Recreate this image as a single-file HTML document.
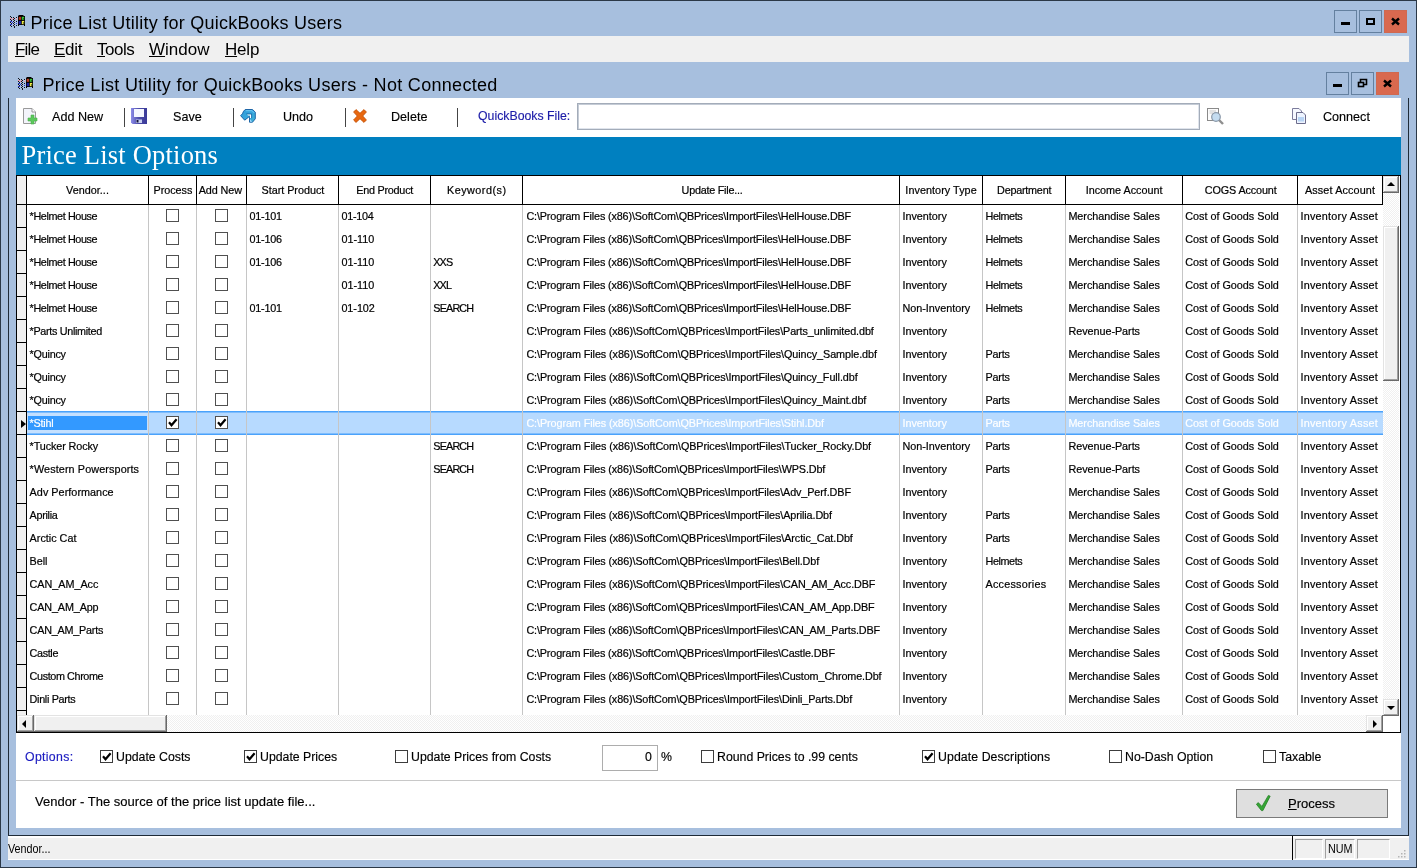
<!DOCTYPE html>
<html lang="en"><head><meta charset="utf-8"><title>Price List Utility for QuickBooks Users</title>
<style>
html,body{margin:0;padding:0;width:1417px;height:868px;overflow:hidden}
body{width:1417px;height:868px;overflow:hidden;position:relative;background:#a7bfde;font-family:"Liberation Sans",sans-serif;color:#000}
div,span,i,u,b{box-sizing:border-box}
.abs{position:absolute}
#frame{position:absolute;left:0;top:0;width:1417px;height:868px;border:1px solid #2b3847}
#t1{position:absolute;left:30.4px;top:11px;font-size:18px;line-height:24px;white-space:nowrap;letter-spacing:0.25px}
#menubar{position:absolute;left:8px;top:36px;width:1401px;height:26px;background:#f0f0f0}
#menubar span{position:absolute;top:1px;font-size:17px;line-height:25px;white-space:nowrap}
#menubar span u{text-decoration:underline;text-underline-offset:1px;text-decoration-thickness:1px}
#t2{position:absolute;left:42.5px;top:73px;font-size:18px;line-height:24px;white-space:nowrap;letter-spacing:0.31px}
.wb{position:absolute;width:23px;height:23px;border:1px solid #64809f;background:#a7bfde}
.wb.cl{background:#d9694f;border-color:#cf6950}
.wb svg{position:absolute;left:0;top:0}
#child{position:absolute;left:8px;top:98px;width:1401px;height:738px;border:1px solid #1f2b38;border-top:0}
#content{position:absolute;left:16px;top:98px;width:1385px;height:730px;background:#fff}
#banner{position:absolute;left:16px;top:137px;width:1385px;height:38px;background:#0080c0;color:#fff;font-family:"Liberation Serif",serif;font-size:26.5px;line-height:36px;padding-left:5.6px;letter-spacing:0.2px;white-space:nowrap}
.tb{position:absolute;top:109px;font-size:12.6px;line-height:16px;white-space:nowrap}
.sep{position:absolute;top:108px;width:1px;height:19px;background:#444}
.ico{position:absolute}
#qbf{position:absolute;left:577px;top:103px;width:623px;height:27px;border:1px solid #a3acb9;box-shadow:inset 1px 1px 0 #c5ccd6, inset -1px -1px 0 #dfe4ec;background:#fff}
#gridbox{position:absolute;left:16px;top:175px;width:1385px;height:558px;border:1px solid #000;background:#fff}
#grid{position:absolute;left:0;top:0;width:0;height:0;font-size:10.8px}
.hsel{position:absolute;left:17px;top:176px;width:10px;height:29px;background:#f0f0f0;border-right:1px solid #000;border-bottom:1px solid #000}
.hc{position:absolute;top:176px;height:28px;border-right:1px solid #000;border-bottom:1px solid #000;box-sizing:content-box;text-align:center;line-height:28px;white-space:nowrap;background:#fff;overflow:hidden}
.vl{position:absolute;top:205px;width:1px;height:510px;background:#c6c6c6}
.row{position:absolute;left:0;width:1383px;height:23px;line-height:22px;white-space:nowrap}
.rs{position:absolute;left:17px;top:0;width:10px;height:23px;background:#f0f0f0;border-right:1px solid #000;border-bottom:1px solid #000}
.c{position:absolute;top:0;height:22px;padding-left:3px;overflow:hidden}
.cb{position:absolute;top:4px;width:13px;height:13px;border:1px solid #505050;background:#fff;text-decoration:none}
.cb svg{position:absolute;left:-1px;top:-1px}
.row.sel{}
.row.sel .c{color:#fff}
.tri{position:absolute;left:4px;top:8px;width:0;height:0;border-left:5px solid #000;border-top:4.5px solid transparent;border-bottom:4.5px solid transparent}
#selbg{position:absolute;left:27px;top:411px;width:1356px;height:24px;background:#b7daff;border-top:1px solid #4aa2fb;border-bottom:1px solid #4aa2fb;box-shadow:inset 0 1px 0 #7fbdfd, inset 0 -1px 0 #7fbdfd}
#focus{position:absolute;left:27px;top:413px;width:121px;height:20px;background:#3399ff;border:3px solid #c4e0ff;border-left-width:1px;border-right-width:1px}
.opt{position:absolute;font-size:12.3px;line-height:16px;white-space:nowrap;top:749px}
.ocb{position:absolute;top:750px;width:13px;height:13px;border:1px solid #3c3c3c;background:#fff}
.ocb svg{position:absolute;left:-1px;top:-1px}
#status{position:absolute;left:8px;top:836px;width:1401px;height:24px;background:#f0f0f0;border-top:2px solid #fff;border-bottom:1px solid #fff;font-size:12px}
.sp{position:absolute;top:839px;height:20px;border:1px solid #a0a0a0;border-right-color:#fff;border-bottom-color:#fff}
.trk{position:absolute;background:repeating-conic-gradient(#ffffff 0% 25%, #f0f0f0 0% 50%) 0 0/2px 2px}
.b3{position:absolute;background:#f0f0f0;box-shadow:inset -1px -1px 0 #696969, inset 1px 1px 0 #e3e3e3, inset -2px -2px 0 #a0a0a0, inset 2px 2px 0 #fff}
.ar{position:absolute;width:0;height:0}
#app{position:absolute;left:0;top:0;width:1417px;height:868px;will-change:transform}
#grid{-webkit-text-stroke:0.2px currentColor}
.opt,.tb,#desc,#proc{-webkit-text-stroke:0.15px currentColor}

</style></head>
<body>
<div id="app">
<div id="frame"></div>
<svg class="ico" style="left:9px;top:15px" width="17" height="13" viewBox="0 0 17 13"><rect x="1" y="1" width="1" height="1" fill="#101018"/><rect x="2" y="2" width="1" height="1" fill="#101018"/><rect x="1" y="4" width="1" height="1" fill="#101018"/><rect x="2" y="5" width="1" height="1" fill="#101018"/><rect x="1" y="7" width="1" height="1" fill="#101018"/><rect x="2" y="8" width="1" height="1" fill="#101018"/><rect x="1" y="10" width="1" height="1" fill="#101018"/><rect x="2" y="11" width="1" height="1" fill="#101018"/><rect x="1" y="3" width="1" height="1" fill="#e890a0"/><rect x="2" y="3" width="1" height="1" fill="#e890a0"/><rect x="1" y="6" width="1" height="1" fill="#2838c8"/><rect x="2" y="6" width="1" height="1" fill="#2838c8"/><rect x="1" y="9" width="1" height="1" fill="#2838c8"/><rect x="2" y="9" width="1" height="1" fill="#2838c8"/><rect x="4" y="2" width="1" height="1" fill="#101018"/><rect x="5" y="3" width="1" height="1" fill="#101018"/><rect x="4" y="4" width="1" height="1" fill="#101018"/><rect x="5" y="5" width="1" height="1" fill="#101018"/><rect x="4" y="6" width="1" height="1" fill="#101018"/><rect x="5" y="7" width="1" height="1" fill="#101018"/><rect x="4" y="8" width="1" height="1" fill="#101018"/><rect x="5" y="9" width="1" height="1" fill="#101018"/><rect x="4" y="10" width="1" height="1" fill="#101018"/><rect x="5" y="11" width="1" height="1" fill="#101018"/><rect x="5" y="12" width="1" height="1" fill="#101018"/><rect x="3" y="4" width="1" height="1" fill="#e890a0"/><rect x="4" y="3" width="1" height="1" fill="#e890a0"/><rect x="3" y="7" width="1" height="1" fill="#2838c8"/><rect x="3" y="8" width="1" height="1" fill="#a8b8f0"/><rect x="3" y="6" width="1" height="1" fill="#a8b8f0"/><rect x="7" y="2" width="1" height="1" fill="#101018"/><rect x="7" y="4" width="1" height="1" fill="#e890a0"/><rect x="7" y="6" width="1" height="1" fill="#101018"/><rect x="7" y="8" width="1" height="1" fill="#2838c8"/><rect x="7" y="10" width="1" height="1" fill="#101018"/><rect x="7" y="3" width="1" height="1" fill="#d8c8d8"/><rect x="7" y="7" width="1" height="1" fill="#a8b8f0"/><rect x="7" y="9" width="1" height="1" fill="#a8b8f0"/><path d="M9 1 L10 0 H14 L15 1 H16 V11 H15 V10 H10 V11 H9Z" fill="#000"/><rect x="9.7" y="1.8" width="2.4" height="3" fill="#b83820"/><rect x="12.8" y="1.8" width="2.4" height="3" fill="#38c838"/><rect x="9.7" y="5.9" width="2.4" height="3.3" fill="#2020a0"/><rect x="12.8" y="5.9" width="2.4" height="3.3" fill="#f0f048"/><path d="M13.6 3.4 L15.2 3.4 L15.2 4.8Z M13.6 7.6 L15.2 7.6 L15.2 9.2Z" fill="#000"/></svg>
<div id="t1">Price List Utility for QuickBooks Users</div>
<div class="wb" style="left:1334px;top:10px"><svg width="21" height="21" viewBox="0 0 21 21"><rect x="6" y="11" width="9" height="3" fill="#000"/></svg></div>
<div class="wb" style="left:1359px;top:10px"><svg width="21" height="21" viewBox="0 0 21 21"><rect x="7" y="8" width="7" height="5" fill="none" stroke="#000" stroke-width="2"/></svg></div>
<div class="wb cl" style="left:1384px;top:10px"><svg width="21" height="21" viewBox="0 0 21 21"><path d="M7 7.5 L14 13.5 M14 7.5 L7 13.5" stroke="#000" stroke-width="2.4"/></svg></div>
<div id="menubar"><span style="left:7px;letter-spacing:-0.8px"><u>F</u>ile</span><span style="left:46px;letter-spacing:-0.3px"><u>E</u>dit</span><span style="left:89px;letter-spacing:-0.5px"><u>T</u>ools</span><span style="left:141px"><u>W</u>indow</span><span style="left:217px;letter-spacing:-0.2px"><u>H</u>elp</span></div>
<svg class="ico" style="left:17px;top:77px" width="17" height="13" viewBox="0 0 17 13"><rect x="1" y="1" width="1" height="1" fill="#101018"/><rect x="2" y="2" width="1" height="1" fill="#101018"/><rect x="1" y="4" width="1" height="1" fill="#101018"/><rect x="2" y="5" width="1" height="1" fill="#101018"/><rect x="1" y="7" width="1" height="1" fill="#101018"/><rect x="2" y="8" width="1" height="1" fill="#101018"/><rect x="1" y="10" width="1" height="1" fill="#101018"/><rect x="2" y="11" width="1" height="1" fill="#101018"/><rect x="1" y="3" width="1" height="1" fill="#e890a0"/><rect x="2" y="3" width="1" height="1" fill="#e890a0"/><rect x="1" y="6" width="1" height="1" fill="#2838c8"/><rect x="2" y="6" width="1" height="1" fill="#2838c8"/><rect x="1" y="9" width="1" height="1" fill="#2838c8"/><rect x="2" y="9" width="1" height="1" fill="#2838c8"/><rect x="4" y="2" width="1" height="1" fill="#101018"/><rect x="5" y="3" width="1" height="1" fill="#101018"/><rect x="4" y="4" width="1" height="1" fill="#101018"/><rect x="5" y="5" width="1" height="1" fill="#101018"/><rect x="4" y="6" width="1" height="1" fill="#101018"/><rect x="5" y="7" width="1" height="1" fill="#101018"/><rect x="4" y="8" width="1" height="1" fill="#101018"/><rect x="5" y="9" width="1" height="1" fill="#101018"/><rect x="4" y="10" width="1" height="1" fill="#101018"/><rect x="5" y="11" width="1" height="1" fill="#101018"/><rect x="5" y="12" width="1" height="1" fill="#101018"/><rect x="3" y="4" width="1" height="1" fill="#e890a0"/><rect x="4" y="3" width="1" height="1" fill="#e890a0"/><rect x="3" y="7" width="1" height="1" fill="#2838c8"/><rect x="3" y="8" width="1" height="1" fill="#a8b8f0"/><rect x="3" y="6" width="1" height="1" fill="#a8b8f0"/><rect x="7" y="2" width="1" height="1" fill="#101018"/><rect x="7" y="4" width="1" height="1" fill="#e890a0"/><rect x="7" y="6" width="1" height="1" fill="#101018"/><rect x="7" y="8" width="1" height="1" fill="#2838c8"/><rect x="7" y="10" width="1" height="1" fill="#101018"/><rect x="7" y="3" width="1" height="1" fill="#d8c8d8"/><rect x="7" y="7" width="1" height="1" fill="#a8b8f0"/><rect x="7" y="9" width="1" height="1" fill="#a8b8f0"/><path d="M9 1 L10 0 H14 L15 1 H16 V11 H15 V10 H10 V11 H9Z" fill="#000"/><rect x="9.7" y="1.8" width="2.4" height="3" fill="#b83820"/><rect x="12.8" y="1.8" width="2.4" height="3" fill="#38c838"/><rect x="9.7" y="5.9" width="2.4" height="3.3" fill="#2020a0"/><rect x="12.8" y="5.9" width="2.4" height="3.3" fill="#f0f048"/><path d="M13.6 3.4 L15.2 3.4 L15.2 4.8Z M13.6 7.6 L15.2 7.6 L15.2 9.2Z" fill="#000"/></svg>
<div id="t2">Price List Utility for QuickBooks Users - Not Connected</div>
<div class="wb" style="left:1326px;top:72px"><svg width="21" height="21" viewBox="0 0 21 21"><rect x="6" y="11" width="9" height="3" fill="#000"/></svg></div>
<div class="wb" style="left:1351px;top:72px"><svg width="21" height="21" viewBox="0 0 21 21"><path d="M8.5 9 V6.5 H14.5 V11.5 H12" fill="none" stroke="#000" stroke-width="1.6"/><rect x="6.5" y="9.5" width="5" height="4" fill="none" stroke="#000" stroke-width="1.6"/></svg></div>
<div class="wb cl" style="left:1376px;top:72px"><svg width="21" height="21" viewBox="0 0 21 21"><path d="M7 7.5 L14 13.5 M14 7.5 L7 13.5" stroke="#000" stroke-width="2.4"/></svg></div>
<div id="child"></div>
<div id="content"></div>
<!-- toolbar -->
<svg class="ico" style="left:23px;top:108px" width="16" height="17" viewBox="0 0 16 17"><path d="M0.5 0.5 H9 L12.5 4 V15.5 H0.5Z" fill="#f3f4fb" stroke="#9a9a9a"/><path d="M9 0.5 V4 H12.5" fill="#fff" stroke="#9a9a9a"/><path d="M8 7 H11 V10 H14 V13 H11 V16 H8 V13 H5 V10 H8Z" fill="#5cc85c" stroke="#49b049" stroke-width="0.6"/></svg>
<div class="tb" style="left:52px">Add New</div>
<div class="sep" style="left:124px"></div>
<svg class="ico" style="left:131px;top:108px" width="16" height="16" viewBox="0 0 16 16"><defs><linearGradient id="sg" x1="0" y1="0" x2="1" y2="0"><stop offset="0" stop-color="#8c8ce8"/><stop offset="0.5" stop-color="#4a4aa8"/><stop offset="1" stop-color="#3a3a98"/></linearGradient></defs><path d="M0 0 H16 V16 H1.5 L0 14.5Z" fill="url(#sg)"/><rect x="3" y="1" width="10" height="8" fill="#f4f6ff"/><rect x="5" y="11.5" width="6" height="3.5" fill="#c8d0f0"/><rect x="5.5" y="12" width="2" height="2.5" fill="#10103a"/></svg>
<div class="tb" style="left:173px">Save</div>
<div class="sep" style="left:233px"></div>
<svg class="ico" style="left:240px;top:108px" width="16" height="16" viewBox="0 0 16 16"><defs><linearGradient id="ug" x1="0" y1="0" x2="1" y2="1"><stop offset="0" stop-color="#2f9ad8"/><stop offset="0.5" stop-color="#37a6dc"/><stop offset="1" stop-color="#3fb4d4"/></linearGradient></defs><path d="M5.2 1.5 H12.5 L15.3 4.2 V10.8 L12.5 14.2 H9.5 V8.4 L4.7 12.2 L0.6 7.7 L2.4 5.8 L3.6 3.2Z" fill="url(#ug)" stroke="#11599f" stroke-width="0.9" stroke-linejoin="round"/><path d="M7 6.2 H11.2 V10 H9.9 V7.4 H8Z" fill="#fff"/><path d="M6.3 5.9 H11.6 V10.2" fill="none" stroke="#11599f" stroke-width="0.7"/><path d="M10 11.2 L12.3 13.7 H10Z" fill="#a6d8ff"/><path d="M5.8 2.7 H12 L14.2 4.9" fill="none" stroke="#78cdf6" stroke-width="0.9"/></svg>
<div class="tb" style="left:283px">Undo</div>
<div class="sep" style="left:345px"></div>
<svg class="ico" style="left:353px;top:109px" width="14" height="14" viewBox="0 0 14 14"><path d="M3 0.6 L7 4.3 L11 0.6 L13.4 3 L9.7 7 L13.4 11 L11 13.4 L7 9.7 L3 13.4 L0.6 11 L4.3 7 L0.6 3Z" fill="#e8670f" stroke="#c45208" stroke-width="0.9" stroke-linejoin="round"/></svg>
<div class="tb" style="left:391px">Delete</div>
<div class="sep" style="left:457px"></div>
<div class="tb" style="left:478px;color:#1c1ca8;font-size:12.3px;top:108px">QuickBooks File:</div>
<div id="qbf"></div>
<svg class="ico" style="left:1207px;top:108px" width="18" height="17" viewBox="0 0 18 17"><rect x="0.5" y="0.5" width="11" height="12" fill="#fcfcfc" stroke="#8a8a8a"/><path d="M2.5 3 H9 M2.5 5 H6" stroke="#c8c8c8"/><path d="M12 12 L16 16" stroke="#8f8f8f" stroke-width="2.4"/><circle cx="9" cy="9" r="4.3" fill="#c4dcf0" stroke="#8a98a8" stroke-width="1.2"/></svg>
<svg class="ico" style="left:1292px;top:108px" width="15" height="17" viewBox="0 0 15 17"><path d="M0.5 0.5 H7 L9.5 3 V11.5 H0.5Z" fill="#f6f8ff" stroke="#7c7c9c"/><path d="M4.5 4.5 H11 L13.5 7 V15.5 H4.5Z" fill="#eef4ff" stroke="#6c6c8c"/><rect x="6" y="9" width="6" height="4.5" fill="#b8d4f4"/></svg>
<div class="tb" style="left:1323px">Connect</div>
<div id="banner">Price List Options</div>
<div id="gridbox"></div>
<div id="grid">
<div id="selbg"></div>
<div id="focus"></div>
<div class="hsel"></div>
<div class="hc" style="left:27px;width:121px"><span style="position:relative;left:0.00px;letter-spacing:0.025px">Vendor...</span></div>
<div class="hc" style="left:149px;width:47px"><span style="position:relative;left:0.45px;letter-spacing:-0.017px">Process</span></div>
<div class="hc" style="left:197px;width:49px"><span style="position:relative;left:-1.25px;letter-spacing:-0.083px">Add New</span></div>
<div class="hc" style="left:247px;width:91px"><span style="position:relative;left:0.40px;letter-spacing:-0.017px">Start Product</span></div>
<div class="hc" style="left:339px;width:91px"><span style="position:relative;left:0.15px;letter-spacing:-0.230px">End Product</span></div>
<div class="hc" style="left:431px;width:91px"><span style="position:relative;left:0.25px;letter-spacing:0.500px">Keyword(s)</span></div>
<div class="hc" style="left:523px;width:376px"><span style="position:relative;left:1.05px;letter-spacing:-0.238px">Update File...</span></div>
<div class="hc" style="left:900px;width:82px"><span style="position:relative;left:0.05px;letter-spacing:0.054px">Inventory Type</span></div>
<div class="hc" style="left:983px;width:82px"><span style="position:relative;left:0.15px;letter-spacing:-0.233px">Department</span></div>
<div class="hc" style="left:1066px;width:116px"><span style="position:relative;left:0.10px;letter-spacing:0.000px">Income Account</span></div>
<div class="hc" style="left:1183px;width:114px"><span style="position:relative;left:0.70px;letter-spacing:-0.127px">COGS Account</span></div>
<div class="hc" style="left:1298px;width:84px"><span style="position:relative;left:0.00px;letter-spacing:0.133px">Asset Account</span></div>
<div class="vl" style="left:148px"></div>
<div class="vl" style="left:196px"></div>
<div class="vl" style="left:246px"></div>
<div class="vl" style="left:338px"></div>
<div class="vl" style="left:430px"></div>
<div class="vl" style="left:522px"></div>
<div class="vl" style="left:899px"></div>
<div class="vl" style="left:982px"></div>
<div class="vl" style="left:1065px"></div>
<div class="vl" style="left:1182px"></div>
<div class="vl" style="left:1297px"></div>
<div class="row" id="r0" style="top:205px"><i class="rs"></i><span class="c v" style="left:27px;width:121px;padding-left:2.60px;letter-spacing:-0.384px">*Helmet House</span><u class="cb" style="left:166px"></u><u class="cb" style="left:215px"></u><span class="c" style="left:247px;width:91px;padding-left:2.50px;letter-spacing:-0.240px">01-101</span><span class="c" style="left:339px;width:91px;padding-left:2.40px;letter-spacing:-0.240px">01-104</span><span class="c" style="left:523px;width:376px;padding-left:3.40px;letter-spacing:-0.139px">C:\Program Files (x86)\SoftCom\QBPrices\ImportFiles\HelHouse.DBF</span><span class="c" style="left:900px;width:82px;padding-left:2.40px">Inventory</span><span class="c" style="left:983px;width:82px;padding-left:2.50px;letter-spacing:-0.400px">Helmets</span><span class="c" style="left:1066px;width:116px;padding-left:2.40px;letter-spacing:-0.025px">Merchandise Sales</span><span class="c" style="left:1183px;width:114px;padding-left:2.20px;letter-spacing:0.003px">Cost of Goods Sold</span><span class="c" style="left:1298px;width:84px;padding-left:2.40px;letter-spacing:0.257px">Inventory Asset</span></div>
<div class="row" id="r1" style="top:228px"><i class="rs"></i><span class="c v" style="left:27px;width:121px;padding-left:2.60px;letter-spacing:-0.384px">*Helmet House</span><u class="cb" style="left:166px"></u><u class="cb" style="left:215px"></u><span class="c" style="left:247px;width:91px;padding-left:2.50px;letter-spacing:-0.240px">01-106</span><span class="c" style="left:339px;width:91px;padding-left:2.40px">01-110</span><span class="c" style="left:523px;width:376px;padding-left:3.40px;letter-spacing:-0.139px">C:\Program Files (x86)\SoftCom\QBPrices\ImportFiles\HelHouse.DBF</span><span class="c" style="left:900px;width:82px;padding-left:2.40px">Inventory</span><span class="c" style="left:983px;width:82px;padding-left:2.50px;letter-spacing:-0.400px">Helmets</span><span class="c" style="left:1066px;width:116px;padding-left:2.40px;letter-spacing:-0.025px">Merchandise Sales</span><span class="c" style="left:1183px;width:114px;padding-left:2.20px;letter-spacing:0.003px">Cost of Goods Sold</span><span class="c" style="left:1298px;width:84px;padding-left:2.40px;letter-spacing:0.257px">Inventory Asset</span></div>
<div class="row" id="r2" style="top:251px"><i class="rs"></i><span class="c v" style="left:27px;width:121px;padding-left:2.60px;letter-spacing:-0.384px">*Helmet House</span><u class="cb" style="left:166px"></u><u class="cb" style="left:215px"></u><span class="c" style="left:247px;width:91px;padding-left:2.50px;letter-spacing:-0.240px">01-106</span><span class="c" style="left:339px;width:91px;padding-left:2.40px">01-110</span><span class="c" style="left:431px;width:91px;padding-left:2.30px;letter-spacing:-0.900px">XXS</span><span class="c" style="left:523px;width:376px;padding-left:3.40px;letter-spacing:-0.139px">C:\Program Files (x86)\SoftCom\QBPrices\ImportFiles\HelHouse.DBF</span><span class="c" style="left:900px;width:82px;padding-left:2.40px">Inventory</span><span class="c" style="left:983px;width:82px;padding-left:2.50px;letter-spacing:-0.400px">Helmets</span><span class="c" style="left:1066px;width:116px;padding-left:2.40px;letter-spacing:-0.025px">Merchandise Sales</span><span class="c" style="left:1183px;width:114px;padding-left:2.20px;letter-spacing:0.003px">Cost of Goods Sold</span><span class="c" style="left:1298px;width:84px;padding-left:2.40px;letter-spacing:0.257px">Inventory Asset</span></div>
<div class="row" id="r3" style="top:274px"><i class="rs"></i><span class="c v" style="left:27px;width:121px;padding-left:2.60px;letter-spacing:-0.384px">*Helmet House</span><u class="cb" style="left:166px"></u><u class="cb" style="left:215px"></u><span class="c" style="left:339px;width:91px;padding-left:2.40px">01-110</span><span class="c" style="left:431px;width:91px;padding-left:2.30px;letter-spacing:-0.900px">XXL</span><span class="c" style="left:523px;width:376px;padding-left:3.40px;letter-spacing:-0.139px">C:\Program Files (x86)\SoftCom\QBPrices\ImportFiles\HelHouse.DBF</span><span class="c" style="left:900px;width:82px;padding-left:2.40px">Inventory</span><span class="c" style="left:983px;width:82px;padding-left:2.50px;letter-spacing:-0.400px">Helmets</span><span class="c" style="left:1066px;width:116px;padding-left:2.40px;letter-spacing:-0.025px">Merchandise Sales</span><span class="c" style="left:1183px;width:114px;padding-left:2.20px;letter-spacing:0.003px">Cost of Goods Sold</span><span class="c" style="left:1298px;width:84px;padding-left:2.40px;letter-spacing:0.257px">Inventory Asset</span></div>
<div class="row" id="r4" style="top:297px"><i class="rs"></i><span class="c v" style="left:27px;width:121px;padding-left:2.60px;letter-spacing:-0.384px">*Helmet House</span><u class="cb" style="left:166px"></u><u class="cb" style="left:215px"></u><span class="c" style="left:247px;width:91px;padding-left:2.50px;letter-spacing:-0.240px">01-101</span><span class="c" style="left:339px;width:91px;padding-left:2.40px;letter-spacing:-0.040px">01-102</span><span class="c" style="left:431px;width:91px;padding-left:2.30px;letter-spacing:-0.840px">SEARCH</span><span class="c" style="left:523px;width:376px;padding-left:3.40px;letter-spacing:-0.139px">C:\Program Files (x86)\SoftCom\QBPrices\ImportFiles\HelHouse.DBF</span><span class="c" style="left:900px;width:82px;padding-left:2.40px;letter-spacing:-0.003px">Non-Inventory</span><span class="c" style="left:983px;width:82px;padding-left:2.50px;letter-spacing:-0.400px">Helmets</span><span class="c" style="left:1066px;width:116px;padding-left:2.40px;letter-spacing:-0.025px">Merchandise Sales</span><span class="c" style="left:1183px;width:114px;padding-left:2.20px;letter-spacing:0.003px">Cost of Goods Sold</span><span class="c" style="left:1298px;width:84px;padding-left:2.40px;letter-spacing:0.257px">Inventory Asset</span></div>
<div class="row" id="r5" style="top:320px"><i class="rs"></i><span class="c v" style="left:27px;width:121px;padding-left:2.60px;letter-spacing:-0.320px">*Parts Unlimited</span><u class="cb" style="left:166px"></u><u class="cb" style="left:215px"></u><span class="c" style="left:523px;width:376px;padding-left:3.40px;letter-spacing:-0.094px">C:\Program Files (x86)\SoftCom\QBPrices\ImportFiles\Parts_unlimited.dbf</span><span class="c" style="left:900px;width:82px;padding-left:2.40px">Inventory</span><span class="c" style="left:1066px;width:116px;padding-left:2.40px;letter-spacing:-0.033px">Revenue-Parts</span><span class="c" style="left:1183px;width:114px;padding-left:2.20px;letter-spacing:0.003px">Cost of Goods Sold</span><span class="c" style="left:1298px;width:84px;padding-left:2.40px;letter-spacing:0.257px">Inventory Asset</span></div>
<div class="row" id="r6" style="top:343px"><i class="rs"></i><span class="c v" style="left:27px;width:121px;padding-left:2.60px;letter-spacing:-0.234px">*Quincy</span><u class="cb" style="left:166px"></u><u class="cb" style="left:215px"></u><span class="c" style="left:523px;width:376px;padding-left:3.40px;letter-spacing:-0.077px">C:\Program Files (x86)\SoftCom\QBPrices\ImportFiles\Quincy_Sample.dbf</span><span class="c" style="left:900px;width:82px;padding-left:2.40px">Inventory</span><span class="c" style="left:983px;width:82px;padding-left:2.50px;letter-spacing:-0.200px">Parts</span><span class="c" style="left:1066px;width:116px;padding-left:2.40px;letter-spacing:-0.025px">Merchandise Sales</span><span class="c" style="left:1183px;width:114px;padding-left:2.20px;letter-spacing:0.003px">Cost of Goods Sold</span><span class="c" style="left:1298px;width:84px;padding-left:2.40px;letter-spacing:0.257px">Inventory Asset</span></div>
<div class="row" id="r7" style="top:366px"><i class="rs"></i><span class="c v" style="left:27px;width:121px;padding-left:2.60px;letter-spacing:-0.234px">*Quincy</span><u class="cb" style="left:166px"></u><u class="cb" style="left:215px"></u><span class="c" style="left:523px;width:376px;padding-left:3.40px;letter-spacing:-0.080px">C:\Program Files (x86)\SoftCom\QBPrices\ImportFiles\Quincy_Full.dbf</span><span class="c" style="left:900px;width:82px;padding-left:2.40px">Inventory</span><span class="c" style="left:983px;width:82px;padding-left:2.50px;letter-spacing:-0.200px">Parts</span><span class="c" style="left:1066px;width:116px;padding-left:2.40px;letter-spacing:-0.025px">Merchandise Sales</span><span class="c" style="left:1183px;width:114px;padding-left:2.20px;letter-spacing:0.003px">Cost of Goods Sold</span><span class="c" style="left:1298px;width:84px;padding-left:2.40px;letter-spacing:0.257px">Inventory Asset</span></div>
<div class="row" id="r8" style="top:389px"><i class="rs"></i><span class="c v" style="left:27px;width:121px;padding-left:2.60px;letter-spacing:-0.234px">*Quincy</span><u class="cb" style="left:166px"></u><u class="cb" style="left:215px"></u><span class="c" style="left:523px;width:376px;padding-left:3.40px;letter-spacing:-0.084px">C:\Program Files (x86)\SoftCom\QBPrices\ImportFiles\Quincy_Maint.dbf</span><span class="c" style="left:900px;width:82px;padding-left:2.40px">Inventory</span><span class="c" style="left:983px;width:82px;padding-left:2.50px;letter-spacing:-0.200px">Parts</span><span class="c" style="left:1066px;width:116px;padding-left:2.40px;letter-spacing:-0.025px">Merchandise Sales</span><span class="c" style="left:1183px;width:114px;padding-left:2.20px;letter-spacing:0.003px">Cost of Goods Sold</span><span class="c" style="left:1298px;width:84px;padding-left:2.40px;letter-spacing:0.257px">Inventory Asset</span></div>
<div class="row sel" id="r9" style="top:412px"><i class="rs"><b class="tri"></b></i><span class="c v" style="left:27px;width:121px;padding-left:2.60px;letter-spacing:-0.240px">*Stihl</span><u class="cb" style="left:166px"><svg width="13" height="13" viewBox="0 0 13 13"><path d="M3 6.3 L5.5 9.2 L10.6 3.3" fill="none" stroke="#000" stroke-width="2.2"/></svg></u><u class="cb" style="left:215px"><svg width="13" height="13" viewBox="0 0 13 13"><path d="M3 6.3 L5.5 9.2 L10.6 3.3" fill="none" stroke="#000" stroke-width="2.2"/></svg></u><span class="c" style="left:523px;width:376px;padding-left:3.40px;letter-spacing:-0.080px">C:\Program Files (x86)\SoftCom\QBPrices\ImportFiles\Stihl.Dbf</span><span class="c" style="left:900px;width:82px;padding-left:2.40px">Inventory</span><span class="c" style="left:983px;width:82px;padding-left:2.50px;letter-spacing:-0.200px">Parts</span><span class="c" style="left:1066px;width:116px;padding-left:2.40px;letter-spacing:-0.025px">Merchandise Sales</span><span class="c" style="left:1183px;width:114px;padding-left:2.20px;letter-spacing:0.003px">Cost of Goods Sold</span><span class="c" style="left:1298px;width:84px;padding-left:2.40px;letter-spacing:0.257px">Inventory Asset</span></div>
<div class="row" id="r10" style="top:435px"><i class="rs"></i><span class="c v" style="left:27px;width:121px;padding-left:2.60px;letter-spacing:-0.100px">*Tucker Rocky</span><u class="cb" style="left:166px"></u><u class="cb" style="left:215px"></u><span class="c" style="left:431px;width:91px;padding-left:2.30px;letter-spacing:-0.840px">SEARCH</span><span class="c" style="left:523px;width:376px;padding-left:3.40px;letter-spacing:-0.067px">C:\Program Files (x86)\SoftCom\QBPrices\ImportFiles\Tucker_Rocky.Dbf</span><span class="c" style="left:900px;width:82px;padding-left:2.40px;letter-spacing:-0.003px">Non-Inventory</span><span class="c" style="left:983px;width:82px;padding-left:2.50px;letter-spacing:-0.200px">Parts</span><span class="c" style="left:1066px;width:116px;padding-left:2.40px;letter-spacing:-0.033px">Revenue-Parts</span><span class="c" style="left:1183px;width:114px;padding-left:2.20px;letter-spacing:0.003px">Cost of Goods Sold</span><span class="c" style="left:1298px;width:84px;padding-left:2.40px;letter-spacing:0.257px">Inventory Asset</span></div>
<div class="row" id="r11" style="top:458px"><i class="rs"></i><span class="c v" style="left:27px;width:121px;padding-left:2.60px;letter-spacing:0.116px">*Western Powersports</span><u class="cb" style="left:166px"></u><u class="cb" style="left:215px"></u><span class="c" style="left:431px;width:91px;padding-left:2.30px;letter-spacing:-0.840px">SEARCH</span><span class="c" style="left:523px;width:376px;padding-left:3.40px;letter-spacing:-0.121px">C:\Program Files (x86)\SoftCom\QBPrices\ImportFiles\WPS.Dbf</span><span class="c" style="left:900px;width:82px;padding-left:2.40px">Inventory</span><span class="c" style="left:983px;width:82px;padding-left:2.50px;letter-spacing:-0.200px">Parts</span><span class="c" style="left:1066px;width:116px;padding-left:2.40px;letter-spacing:-0.033px">Revenue-Parts</span><span class="c" style="left:1183px;width:114px;padding-left:2.20px;letter-spacing:0.003px">Cost of Goods Sold</span><span class="c" style="left:1298px;width:84px;padding-left:2.40px;letter-spacing:0.257px">Inventory Asset</span></div>
<div class="row" id="r12" style="top:481px"><i class="rs"></i><span class="c v" style="left:27px;width:121px;padding-left:2.60px;letter-spacing:0.042px">Adv Performance</span><u class="cb" style="left:166px"></u><u class="cb" style="left:215px"></u><span class="c" style="left:523px;width:376px;padding-left:3.40px;letter-spacing:-0.095px">C:\Program Files (x86)\SoftCom\QBPrices\ImportFiles\Adv_Perf.DBF</span><span class="c" style="left:900px;width:82px;padding-left:2.40px">Inventory</span><span class="c" style="left:1066px;width:116px;padding-left:2.40px;letter-spacing:-0.025px">Merchandise Sales</span><span class="c" style="left:1183px;width:114px;padding-left:2.20px;letter-spacing:0.003px">Cost of Goods Sold</span><span class="c" style="left:1298px;width:84px;padding-left:2.40px;letter-spacing:0.257px">Inventory Asset</span></div>
<div class="row" id="r13" style="top:504px"><i class="rs"></i><span class="c v" style="left:27px;width:121px;padding-left:2.60px;letter-spacing:-0.300px">Aprilia</span><u class="cb" style="left:166px"></u><u class="cb" style="left:215px"></u><span class="c" style="left:523px;width:376px;padding-left:3.40px;letter-spacing:-0.093px">C:\Program Files (x86)\SoftCom\QBPrices\ImportFiles\Aprilia.Dbf</span><span class="c" style="left:900px;width:82px;padding-left:2.40px">Inventory</span><span class="c" style="left:983px;width:82px;padding-left:2.50px;letter-spacing:-0.200px">Parts</span><span class="c" style="left:1066px;width:116px;padding-left:2.40px;letter-spacing:-0.025px">Merchandise Sales</span><span class="c" style="left:1183px;width:114px;padding-left:2.20px;letter-spacing:0.003px">Cost of Goods Sold</span><span class="c" style="left:1298px;width:84px;padding-left:2.40px;letter-spacing:0.257px">Inventory Asset</span></div>
<div class="row" id="r14" style="top:527px"><i class="rs"></i><span class="c v" style="left:27px;width:121px;padding-left:2.60px">Arctic Cat</span><u class="cb" style="left:166px"></u><u class="cb" style="left:215px"></u><span class="c" style="left:523px;width:376px;padding-left:3.40px;letter-spacing:-0.073px">C:\Program Files (x86)\SoftCom\QBPrices\ImportFiles\Arctic_Cat.Dbf</span><span class="c" style="left:900px;width:82px;padding-left:2.40px">Inventory</span><span class="c" style="left:983px;width:82px;padding-left:2.50px;letter-spacing:-0.200px">Parts</span><span class="c" style="left:1066px;width:116px;padding-left:2.40px;letter-spacing:-0.025px">Merchandise Sales</span><span class="c" style="left:1183px;width:114px;padding-left:2.20px;letter-spacing:0.003px">Cost of Goods Sold</span><span class="c" style="left:1298px;width:84px;padding-left:2.40px;letter-spacing:0.257px">Inventory Asset</span></div>
<div class="row" id="r15" style="top:550px"><i class="rs"></i><span class="c v" style="left:27px;width:121px;padding-left:2.60px;letter-spacing:-0.067px">Bell</span><u class="cb" style="left:166px"></u><u class="cb" style="left:215px"></u><span class="c" style="left:523px;width:376px;padding-left:3.40px;letter-spacing:-0.112px">C:\Program Files (x86)\SoftCom\QBPrices\ImportFiles\Bell.Dbf</span><span class="c" style="left:900px;width:82px;padding-left:2.40px">Inventory</span><span class="c" style="left:983px;width:82px;padding-left:2.50px;letter-spacing:-0.400px">Helmets</span><span class="c" style="left:1066px;width:116px;padding-left:2.40px;letter-spacing:-0.025px">Merchandise Sales</span><span class="c" style="left:1183px;width:114px;padding-left:2.20px;letter-spacing:0.003px">Cost of Goods Sold</span><span class="c" style="left:1298px;width:84px;padding-left:2.40px;letter-spacing:0.257px">Inventory Asset</span></div>
<div class="row" id="r16" style="top:573px"><i class="rs"></i><span class="c v" style="left:27px;width:121px;padding-left:2.60px;letter-spacing:-0.023px">CAN_AM_Acc</span><u class="cb" style="left:166px"></u><u class="cb" style="left:215px"></u><span class="c" style="left:523px;width:376px;padding-left:3.40px;letter-spacing:-0.094px">C:\Program Files (x86)\SoftCom\QBPrices\ImportFiles\CAN_AM_Acc.DBF</span><span class="c" style="left:900px;width:82px;padding-left:2.40px">Inventory</span><span class="c" style="left:983px;width:82px;padding-left:2.50px;letter-spacing:0.240px">Accessories</span><span class="c" style="left:1066px;width:116px;padding-left:2.40px;letter-spacing:-0.025px">Merchandise Sales</span><span class="c" style="left:1183px;width:114px;padding-left:2.20px;letter-spacing:0.003px">Cost of Goods Sold</span><span class="c" style="left:1298px;width:84px;padding-left:2.40px;letter-spacing:0.257px">Inventory Asset</span></div>
<div class="row" id="r17" style="top:596px"><i class="rs"></i><span class="c v" style="left:27px;width:121px;padding-left:2.60px;letter-spacing:-0.134px">CAN_AM_App</span><u class="cb" style="left:166px"></u><u class="cb" style="left:215px"></u><span class="c" style="left:523px;width:376px;padding-left:3.40px;letter-spacing:-0.124px">C:\Program Files (x86)\SoftCom\QBPrices\ImportFiles\CAN_AM_App.DBF</span><span class="c" style="left:900px;width:82px;padding-left:2.40px">Inventory</span><span class="c" style="left:1066px;width:116px;padding-left:2.40px;letter-spacing:-0.025px">Merchandise Sales</span><span class="c" style="left:1183px;width:114px;padding-left:2.20px;letter-spacing:0.003px">Cost of Goods Sold</span><span class="c" style="left:1298px;width:84px;padding-left:2.40px;letter-spacing:0.257px">Inventory Asset</span></div>
<div class="row" id="r18" style="top:619px"><i class="rs"></i><span class="c v" style="left:27px;width:121px;padding-left:2.60px;letter-spacing:-0.219px">CAN_AM_Parts</span><u class="cb" style="left:166px"></u><u class="cb" style="left:215px"></u><span class="c" style="left:523px;width:376px;padding-left:3.40px;letter-spacing:-0.129px">C:\Program Files (x86)\SoftCom\QBPrices\ImportFiles\CAN_AM_Parts.DBF</span><span class="c" style="left:900px;width:82px;padding-left:2.40px">Inventory</span><span class="c" style="left:1066px;width:116px;padding-left:2.40px;letter-spacing:-0.025px">Merchandise Sales</span><span class="c" style="left:1183px;width:114px;padding-left:2.20px;letter-spacing:0.003px">Cost of Goods Sold</span><span class="c" style="left:1298px;width:84px;padding-left:2.40px;letter-spacing:0.257px">Inventory Asset</span></div>
<div class="row" id="r19" style="top:642px"><i class="rs"></i><span class="c v" style="left:27px;width:121px;padding-left:2.60px;letter-spacing:-0.360px">Castle</span><u class="cb" style="left:166px"></u><u class="cb" style="left:215px"></u><span class="c" style="left:523px;width:376px;padding-left:3.40px;letter-spacing:-0.134px">C:\Program Files (x86)\SoftCom\QBPrices\ImportFiles\Castle.DBF</span><span class="c" style="left:900px;width:82px;padding-left:2.40px">Inventory</span><span class="c" style="left:1066px;width:116px;padding-left:2.40px;letter-spacing:-0.025px">Merchandise Sales</span><span class="c" style="left:1183px;width:114px;padding-left:2.20px;letter-spacing:0.003px">Cost of Goods Sold</span><span class="c" style="left:1298px;width:84px;padding-left:2.40px;letter-spacing:0.257px">Inventory Asset</span></div>
<div class="row" id="r20" style="top:665px"><i class="rs"></i><span class="c v" style="left:27px;width:121px;padding-left:2.60px;letter-spacing:-0.384px">Custom Chrome</span><u class="cb" style="left:166px"></u><u class="cb" style="left:215px"></u><span class="c" style="left:523px;width:376px;padding-left:3.40px;letter-spacing:-0.115px">C:\Program Files (x86)\SoftCom\QBPrices\ImportFiles\Custom_Chrome.Dbf</span><span class="c" style="left:900px;width:82px;padding-left:2.40px">Inventory</span><span class="c" style="left:1066px;width:116px;padding-left:2.40px;letter-spacing:-0.025px">Merchandise Sales</span><span class="c" style="left:1183px;width:114px;padding-left:2.20px;letter-spacing:0.003px">Cost of Goods Sold</span><span class="c" style="left:1298px;width:84px;padding-left:2.40px;letter-spacing:0.257px">Inventory Asset</span></div>
<div class="row" id="r21" style="top:688px"><i class="rs"></i><span class="c v" style="left:27px;width:121px;padding-left:2.60px;letter-spacing:-0.320px">Dinli Parts</span><u class="cb" style="left:166px"></u><u class="cb" style="left:215px"></u><span class="c" style="left:523px;width:376px;padding-left:3.40px;letter-spacing:-0.117px">C:\Program Files (x86)\SoftCom\QBPrices\ImportFiles\Dinli_Parts.Dbf</span><span class="c" style="left:900px;width:82px;padding-left:2.40px">Inventory</span><span class="c" style="left:1066px;width:116px;padding-left:2.40px;letter-spacing:-0.025px">Merchandise Sales</span><span class="c" style="left:1183px;width:114px;padding-left:2.20px;letter-spacing:0.003px">Cost of Goods Sold</span><span class="c" style="left:1298px;width:84px;padding-left:2.40px;letter-spacing:0.257px">Inventory Asset</span></div>
<div class="row" style="top:711px;height:5px"><i class="rs" style="height:5px;border-bottom:0"></i></div>
<div class="trk" style="left:1383px;top:176px;width:16px;height:540px"></div>
<div class="trk" style="left:17px;top:715px;width:1366px;height:17px"></div>
<div class="abs" style="left:1383px;top:716px;width:17px;height:16px;background:#fff"></div>
<div class="b3" style="left:1383px;top:176px;width:16px;height:17px"><b class="ar" style="left:4px;top:6px;border-bottom:4px solid #000;border-left:4px solid transparent;border-right:4px solid transparent"></b></div>
<div class="b3" style="left:1383px;top:226px;width:16px;height:155px"></div>
<div class="b3" style="left:1383px;top:699px;width:16px;height:17px"><b class="ar" style="left:4px;top:7px;border-top:4px solid #000;border-left:4px solid transparent;border-right:4px solid transparent"></b></div>
<div class="b3" style="left:17px;top:715px;width:17px;height:17px"><b class="ar" style="left:5px;top:5px;border-right:4px solid #000;border-top:4px solid transparent;border-bottom:4px solid transparent"></b></div>
<div class="b3" style="left:34px;top:715px;width:133px;height:17px"></div>
<div class="b3" style="left:1366px;top:715px;width:17px;height:17px"><b class="ar" style="left:7px;top:5px;border-left:4px solid #000;border-top:4px solid transparent;border-bottom:4px solid transparent"></b></div>
</div>
<div class="opt" style="left:25px;color:#1c1cc0;letter-spacing:0.33px">Options:</div>
<div class="ocb" style="left:100px"><svg width="13" height="13" viewBox="0 0 13 13"><path d="M3 6.3 L5.5 9.2 L10.6 3.3" fill="none" stroke="#000" stroke-width="2.2"/></svg></div><div class="opt" style="left:116px">Update Costs</div>
<div class="ocb" style="left:244px"><svg width="13" height="13" viewBox="0 0 13 13"><path d="M3 6.3 L5.5 9.2 L10.6 3.3" fill="none" stroke="#000" stroke-width="2.2"/></svg></div><div class="opt" style="left:260px">Update Prices</div>
<div class="ocb" style="left:395px"></div><div class="opt" style="left:411px">Update Prices from Costs</div>
<div class="abs" style="left:602px;top:745px;width:56px;height:26px;border:1px solid #adadad;background:#fff"></div>
<div class="opt" style="left:645px">0</div>
<div class="opt" style="left:661px">%</div>
<div class="ocb" style="left:701px"></div><div class="opt" style="left:717px">Round Prices to .99 cents</div>
<div class="ocb" style="left:922px"><svg width="13" height="13" viewBox="0 0 13 13"><path d="M3 6.3 L5.5 9.2 L10.6 3.3" fill="none" stroke="#000" stroke-width="2.2"/></svg></div><div class="opt" style="left:938px;letter-spacing:0.08px">Update Descriptions</div>
<div class="ocb" style="left:1109px"></div><div class="opt" style="left:1125px">No-Dash Option</div>
<div class="ocb" style="left:1263px"></div><div class="opt" style="left:1279px">Taxable</div>
<div class="abs" style="left:16px;top:780px;width:1385px;height:1px;background:#c8c8c8"></div>
<div class="abs" id="desc" style="left:35px;top:794px;font-size:13px;line-height:16px;letter-spacing:0.02px;white-space:nowrap">Vendor - The source of the price list update file...</div>
<div class="abs" style="left:1236px;top:789px;width:152px;height:29px;background:#dfdfdf;border:1px solid #7a7a7a"></div>
<svg class="ico" style="left:1254px;top:794px" width="18" height="18" viewBox="0 0 18 18"><path d="M2.4 10.2 L4.3 8.6 L7.9 12.4 L14.4 1.4 L16.2 2.2 L8.9 16.6 L7.4 16.6Z" fill="#35a535" stroke="#1d7a1d" stroke-width="0.7" stroke-linejoin="round"/></svg>
<div class="abs" id="proc" style="left:1288px;top:796px;font-size:13px;line-height:16px;white-space:nowrap"><u>P</u>rocess</div>
<div id="status"></div>
<div class="abs" id="stxt" style="left:8px;top:841px;font-size:12.5px;line-height:16px;white-space:nowrap;transform:scaleX(0.86);transform-origin:0 0">Vendor...</div>
<div class="abs" style="left:1292px;top:836px;width:1px;height:24px;background:#000"></div>
<div class="sp" style="left:1295px;width:28px"></div>
<div class="sp" style="left:1325px;width:30px"></div>
<div class="abs" id="num" style="left:1327.5px;top:841px;font-size:12.5px;line-height:16px;white-space:nowrap;transform:scaleX(0.86);transform-origin:0 0">NUM</div>
<div class="sp" style="left:1357px;width:33px"></div>
<svg class="ico" style="left:1397px;top:849px" width="10" height="10" viewBox="0 0 10 10"><g fill="#b4b4b4"><rect x="7" y="1" width="1.5" height="1.5"/><rect x="4" y="4" width="1.5" height="1.5"/><rect x="7" y="4" width="1.5" height="1.5"/><rect x="1" y="7" width="1.5" height="1.5"/><rect x="4" y="7" width="1.5" height="1.5"/><rect x="7" y="7" width="1.5" height="1.5"/></g></svg>
</div>
</body></html>
